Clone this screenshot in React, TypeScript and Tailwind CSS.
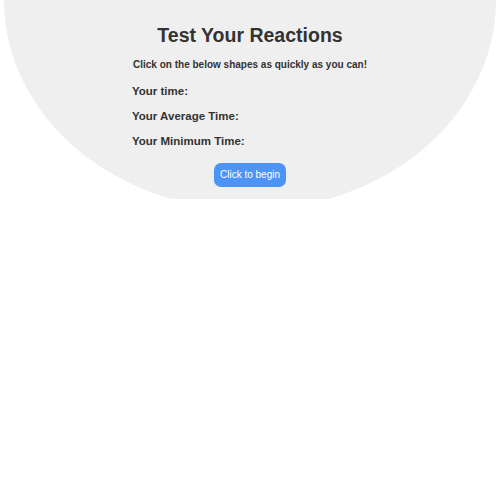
export default function App() {
  return (
    <div className="w-[500px] h-[500px] bg-white" style={{ fontFamily: '"Liberation Sans", Arial, sans-serif' }}>
      <div className="px-1 h-[199px] overflow-hidden">
        <div className="-mt-[210px] h-[420px] rounded-[50%] bg-[#efefef] pt-[210px] text-[#333333]">
          <h1 className="pt-[23px] text-center text-[19.5px] leading-[24px] font-bold">Test Your Reactions</h1>
          <p className="mt-[10.5px] text-center text-[10px] leading-[14px] font-bold">
            Click on the below shapes as quickly as you can!
          </p>
          <div className="mx-auto w-[236px] mt-[11px] flex flex-col gap-[9px] text-[11.5px] leading-[16px] font-bold">
            <div>Your time:</div>
            <div>Your Average Time:</div>
            <div>Your Minimum Time:</div>
          </div>
          <div className="mt-[14px] flex justify-center">
            <button className="h-[24px] w-[72px] rounded-[7px] bg-[#4d94f7] text-white text-[10px] leading-[24px]">
              Click to begin
            </button>
          </div>
        </div>
      </div>
    </div>
  );
}
